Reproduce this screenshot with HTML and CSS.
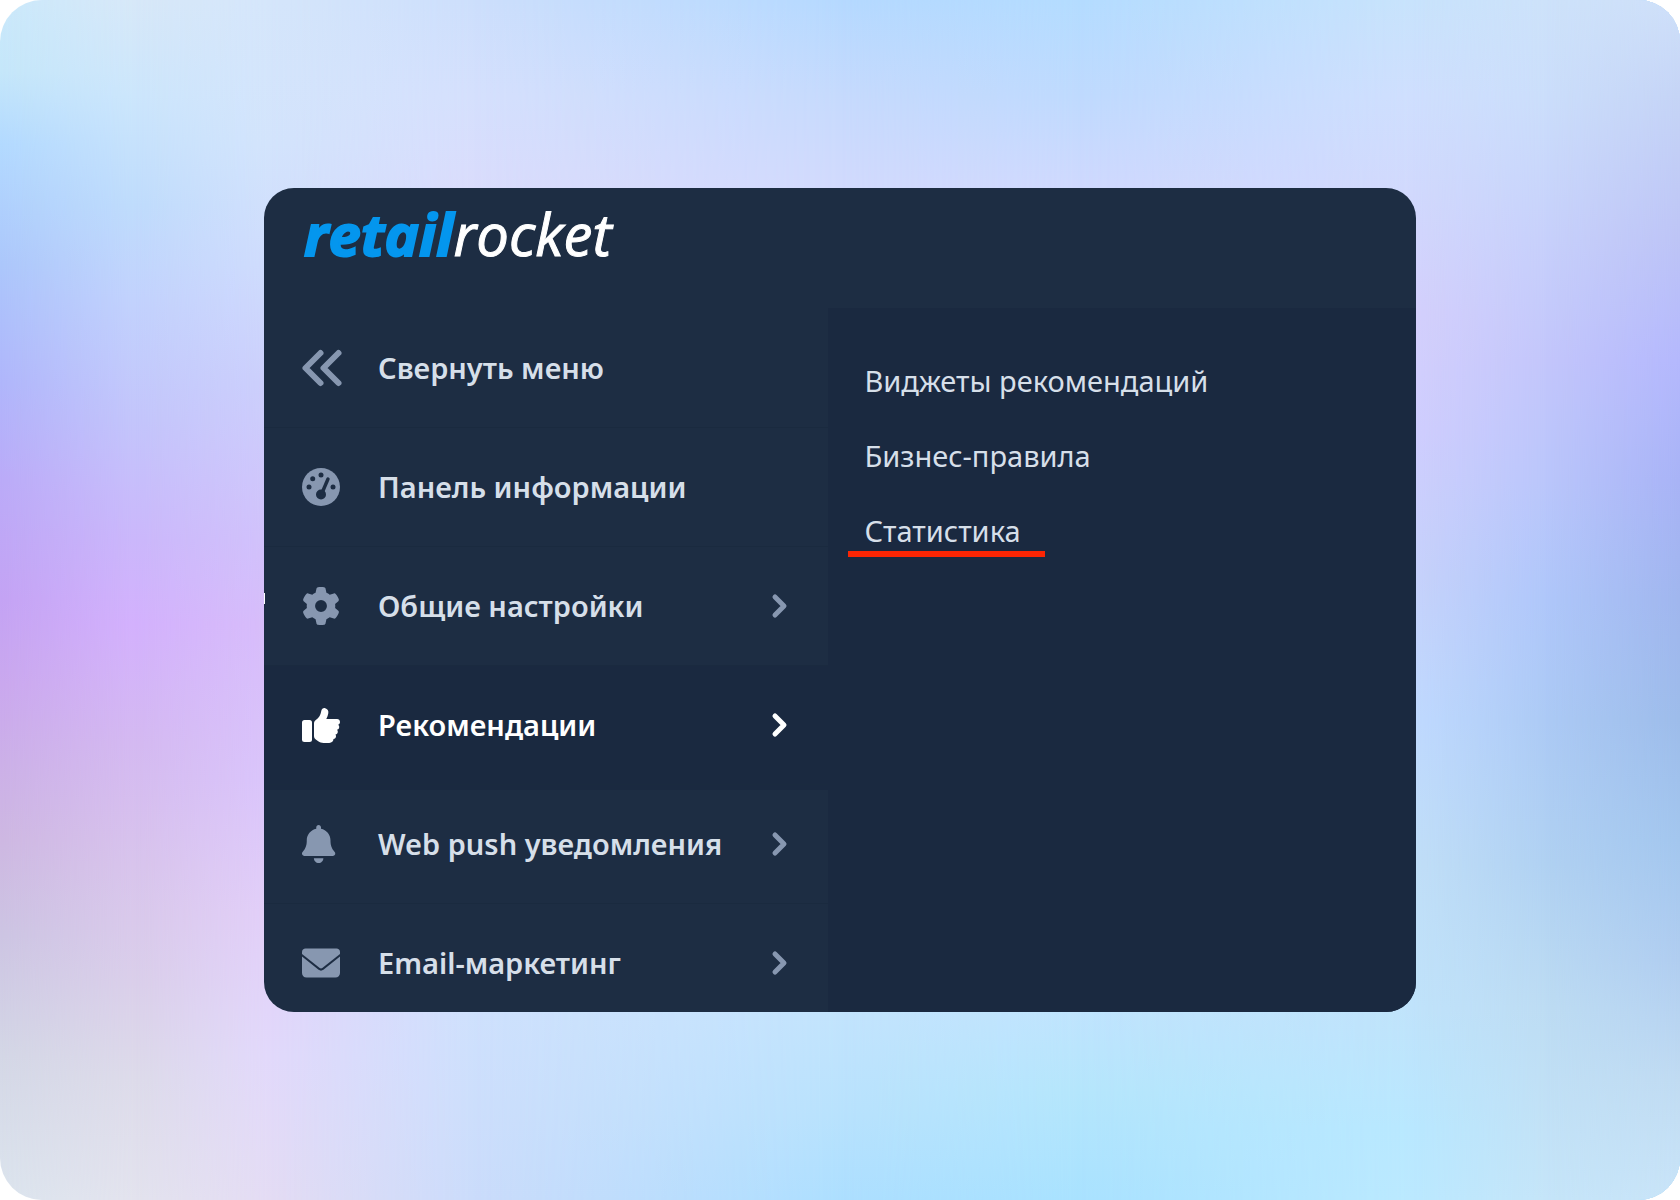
FILE: index.html
```html
<!DOCTYPE html>
<html lang="ru">
<head>
    <meta charset="UTF-8">
    <meta name="viewport" content="width=device-width, initial-scale=1.0">
    <title>Retail Rocket</title>
    <link rel="stylesheet" href="styles.css">
</head>
<body>
    <div class="stage">
        <div class="mesh" aria-hidden="true">
            <div class="band band-1"></div>
            <div class="band band-2"></div>
            <div class="band band-3"></div>
            <div class="band band-4"></div>
            <div class="band band-5"></div>
            <div class="band band-6"></div>
            <div class="band band-7"></div>
            <div class="band band-8"></div>
            <div class="band band-9"></div>
        </div>

        <div class="card">
            <header class="header">
                <a class="logo" href="#"><span class="logo-retail">retail</span><span class="logo-rocket">rocket</span></a>
            </header>

            <div class="content">
                <nav class="sidebar">
                    <button class="item" type="button">
                        <svg class="icon" viewBox="0 0 38 38" fill="none" stroke="currentColor" stroke-width="6" stroke-linecap="round" stroke-linejoin="round">
                            <path d="M18.500 4 3.500 19l15 15M36.500 4l-15 15 15 15"/>
                        </svg>
                        <span class="label">Свернуть меню</span>
                    </button>
                    <a class="item" href="#">
                        <svg class="icon" viewBox="0 0 38 38">
                            <circle cx="19" cy="19" r="19" fill="currentColor"/>
                            <g fill="#1d2d43">
                                <circle cx="7" cy="19" r="2.500"/>
                                <circle cx="10.700" cy="10.700" r="2.500"/>
                                <circle cx="19" cy="7" r="2.500"/>
                                <circle cx="31" cy="19" r="2.500"/>
                                <circle cx="19" cy="26.500" r="5"/>
                            </g>
                            <path d="M20 25l6-14" stroke="#1d2d43" stroke-width="3.400" stroke-linecap="round"/>
                        </svg>
                        <span class="label">Панель информации</span>
                    </a>
                    <a class="item" href="#">
                        <svg class="icon" viewBox="0 0 512 512" fill="currentColor">
                            <path d="M495.900 166.600c3.200 8.700.5 18.400-6.400 24.600l-43.300 39.400c1.100 8.300 1.700 16.800 1.700 25.400s-.6 17.100-1.700 25.400l43.300 39.400c6.900 6.200 9.600 15.900 6.400 24.600-4.400 11.900-9.700 23.300-15.800 34.300l-4.700 8.100c-6.600 11-14 21.400-22.100 31.200-5.900 7.200-15.700 9.600-24.500 6.800l-55.700-17.700c-13.400 10.300-28.200 18.900-44 25.400l-12.500 57.100c-2 9.100-9 16.300-18.200 17.800-13.800 2.300-28 3.500-42.500 3.500s-28.700-1.200-42.500-3.500c-9.200-1.500-16.200-8.700-18.200-17.800l-12.500-57.100c-15.800-6.500-30.600-15.100-44-25.400l-55.600 17.800c-8.800 2.800-18.600.3-24.500-6.800-8.100-9.800-15.500-20.200-22.100-31.200l-4.700-8.100c-6.100-11-11.400-22.400-15.800-34.300-3.200-8.700-.5-18.400 6.400-24.600l43.300-39.400C64.600 273.100 64 264.600 64 256s.6-17.100 1.700-25.400l-43.300-39.400c-6.900-6.200-9.600-15.900-6.400-24.600 4.400-11.900 9.700-23.300 15.800-34.300l4.700-8.100c6.600-11 14-21.400 22.100-31.200 5.900-7.200 15.700-9.600 24.500-6.800l55.700 17.700c13.400-10.300 28.200-18.900 44-25.400l12.500-57.100c2-9.100 9-16.300 18.200-17.800C227.300 1.200 241.500 0 256 0s28.700 1.200 42.500 3.500c9.200 1.500 16.200 8.700 18.200 17.800l12.500 57.100c15.800 6.500 30.600 15.100 44 25.400l55.700-17.700c8.800-2.800 18.600-.3 24.500 6.800 8.100 9.800 15.500 20.200 22.100 31.200l4.700 8.100c6.100 11 11.400 22.400 15.800 34.300zM256 336a80 80 0 1 0 0-160 80 80 0 1 0 0 160z"/>
                        </svg>
                        <span class="label">Общие настройки</span>
                        <svg class="chevron" viewBox="0 0 14 24"><path d="M2 3l9 9-9 9"/></svg>
                    </a>
                    <a class="item active" href="#" aria-current="page">
                        <svg class="icon" viewBox="0 0 38 38" fill="currentColor">
                            <rect x="0" y="14" width="10" height="22" rx="2.500"/>
                            <path d="M12 17.500c0-1.600.6-2.600 1.800-3.500 3.300-2.500 4.700-5 5.400-8.800C19.700 2.800 21.300 1.800 23.200 2.200c2.300.5 3.600 2.600 3.100 5-.4 2.100-1 3.900-2 5.800H35c1.700 0 3 1.300 3 2.900 0 1.300-.8 2.400-2 2.800.9.500 1.300 1.400 1.200 2.500-.1 1.300-1 2.300-2.200 2.600.6.600.9 1.400.8 2.300-.2 1.300-1.100 2.200-2.300 2.500.4.600.6 1.200.5 2-.2 1.400-1.100 2.200-2.500 2.500-.1 2.200-1.600 3.900-4.300 3.900h-5.700c-2 0-3.700-.6-5.300-1.700l-2.400-1.700C12.600 32.700 12 31.500 12 30z"/>
                        </svg>
                        <span class="label">Рекомендации</span>
                        <svg class="chevron" viewBox="0 0 14 24"><path d="M2 3l9 9-9 9"/></svg>
                    </a>
                    <a class="item" href="#">
                        <svg class="icon" viewBox="0 0 512 512" fill="currentColor">
                            <path d="M224 0c-17.700 0-32 14.300-32 32v19.200C119 66 64 130.600 64 208v18.800c0 47-17.300 92.400-48.500 127.600l-7.400 8.300c-8.400 9.400-10.400 22.900-5.300 34.400S19.400 416 32 416h384c12.600 0 24-7.400 29.200-18.900s3.100-25-5.300-34.400l-7.400-8.300C401.300 319.200 384 273.900 384 226.800V208c0-77.400-55-142-128-156.800V32c0-17.700-14.300-32-32-32z"/>
                            <path d="M160 448h128c0 35.300-28.600 64-64 64s-64-28.700-64-64z"/>
                        </svg>
                        <span class="label">Web push уведомления</span>
                        <svg class="chevron" viewBox="0 0 14 24"><path d="M2 3l9 9-9 9"/></svg>
                    </a>
                    <a class="item" href="#">
                        <svg class="icon" viewBox="0 0 38 38" fill="currentColor">
                            <path d="M3.500 4.500h31c2 0 3.500 1.500 3.500 3.500v2L20.300 24c-.8.600-1.800.6-2.600 0L0 10V8c0-2 1.500-3.500 3.500-3.500z"/>
                            <path d="M0 12.500 16.600 25.800c1.400 1.100 3.400 1.100 4.800 0L38 12.500V29c0 2.600-1.900 4.500-4.500 4.500h-29C1.900 33.500 0 31.600 0 29z"/>
                        </svg>
                        <span class="label">Email-маркетинг</span>
                        <svg class="chevron" viewBox="0 0 14 24"><path d="M2 3l9 9-9 9"/></svg>
                    </a>
                </nav>

                <nav class="submenu">
                    <a href="#">Виджеты рекомендаций</a>
                    <a href="#">Бизнес-правила</a>
                    <a class="marked" href="#">Статистика</a>
                </nav>
            </div>
        </div>
    </div>
</body>
</html>
```
FILE: styles.css
```css
* {
    box-sizing: border-box;
}

body {
    margin: 0;
    background: #fff;
    font-family: 'Noto Sans', 'Open Sans', sans-serif;
    font-size: 29px;
    line-height: 38px;
}

.stage {
    position: relative;
    display: flex;
    min-height: 100vh;
    padding: 188px 264px;
    border-radius: 42px;
    overflow: hidden;
}

/* Background: vertical gradients, each one fading into the next from left to right */
.mesh,
.band {
    position: absolute;
    inset: 0;
}

.band {
    -webkit-mask-image: linear-gradient(to right, transparent var(--from), #000 var(--to));
    mask-image: linear-gradient(to right, transparent var(--from), #000 var(--to));
}

.band-1 {
    --from: -1%;
    --to: 0%;
    background: linear-gradient(#cbe9fb, #c5e7fa 6%, #b3daff 12%, #acc7fb 22%, #b0b6fb 32%, #bbabf8 40%, #c4a3f4 50%, #caa8ee 57%, #ceb8e2 70%, #cdc5e3 78%, #d4d7e6 88%, #dce5ee);
}

.band-2 {
    --from: 0%;
    --to: 8%;
    background: linear-gradient(#d7e8f8, #cce6fc 8%, #bfdcfc 17%, #c2d2fd 25%, #c3c5fb 35%, #cbb7fb 45%, #d3b1fd 52%, #d4b9f1 62%, #d8c4ec 72%, #dacfea 82%, #dddbea 90%, #e3e3ee);
}

.band-3 {
    --from: 8%;
    --to: 16%;
    background: linear-gradient(#d5e6fb, #d3e4fc 12%, #cfdcfd 22%, #cccffc 32%, #d1c2fb 45%, #d7bdfa 52%, #dac5fb 65%, #e2cff8 76%, #e2d9fb 88%, #e4dcf4);
}

.band-4 {
    --from: 16%;
    --to: 28%;
    background: linear-gradient(#cddffc, #d5e0fd 8%, #dadcfc 16%, #cfe1fd 84%, #cbdcfb);
}

.band-5 {
    --from: 28%;
    --to: 50%;
    background: linear-gradient(#b5d9ff, #c6dafd 8%, #d2dafd 16%, #c3e4fd 84%, #b8e2fd 93%, #addfff);
}

.band-6 {
    --from: 50%;
    --to: 64%;
    background: linear-gradient(#b4dcff, #bfdafe 8%, #d0d9fe 16%, #c0e4fe 84%, #b5e6fc 91%, #a9e2ff);
}

.band-7 {
    --from: 64%;
    --to: 84%;
    background: linear-gradient(#c8e3fc, #cfdffe 8%, #d1d9fd 16%, #d4d0fc 26%, #d0cefe 36%, #c7d2fb 48%, #c0daff 60%, #c1dff8 72%, #c0e3fb 84%, #b9e8ff 94%, #bbe9ff);
}

.band-8 {
    --from: 84%;
    --to: 92%;
    background: linear-gradient(#cde2fa, #cbdefb 8%, #c7d0fb 20%, #c3c6fb 30%, #bac6fb 40%, #afc7fa 50%, #accaf5 60%, #b0d1f2 72%, #bddcf3 84%, #c5e5f9);
}

.band-9 {
    --from: 92%;
    --to: 100%;
    background: linear-gradient(#cfe0f9, #c5d4f6 8%, #bdc4f6 20%, #b4b8fd 30%, #a8b3f6 40%, #a0b6ee 50%, #9dbcea 60%, #a3c6ee 70%, #b0cdf0 80%, #c0dbf2 90%, #c9e4f8);
}

.card {
    position: relative;
    flex: 1;
    display: flex;
    flex-direction: column;
    border-radius: 30px;
    overflow: hidden;
    background: #1d2d43;
}

/* White tick on the left edge */
.card::before {
    content: '';
    position: absolute;
    left: 0;
    top: 405px;
    width: 1px;
    height: 11px;
    background: #fff;
}

.header {
    height: 120px;
    padding: 10px 40px;
}

.logo {
    display: inline-flex;
    font-family: 'Open Sans', 'Noto Sans', sans-serif;
    font-size: 58px;
    line-height: 72px;
    font-style: italic;
    text-decoration: none;
}

.logo-retail {
    color: #0496ee;
    font-weight: 700;
    -webkit-text-stroke: 2px #0496ee;
}

.logo-rocket {
    color: #fff;
    font-weight: 500;
    -webkit-text-stroke: 1px #fff;
}

.content {
    flex: 1;
    display: flex;
}

.sidebar {
    width: 49%;
    display: flex;
    flex-direction: column;
    padding-top: 1px;
}

.item {
    display: flex;
    align-items: center;
    gap: 38px;
    padding: 40px 41px 40px 38px;
    border: none;
    border-bottom: 1px solid #1a2a3f;
    background: none;
    color: #d6dfe9;
    font: inherit;
    font-weight: 600;
    text-align: left;
    text-decoration: none;
    cursor: pointer;
}

.item:last-child {
    padding-bottom: 27px;
    border-bottom: none;
}

.item.active {
    background: #1a2940;
    box-shadow: 0 5px 0 #1a2940;
    color: #fff;
}

.icon {
    flex: none;
    width: 38px;
    height: 38px;
    overflow: visible;
    color: #8797b0;
}

.label {
    flex: 1;
}

.chevron {
    flex: none;
    width: 14px;
    height: 24px;
    overflow: visible;
    fill: none;
    stroke: #8797b0;
    stroke-width: 5;
    stroke-linecap: round;
    stroke-linejoin: round;
}

.active .icon {
    color: #fff;
}

.active .chevron {
    stroke: #fff;
}

.submenu {
    flex: 1;
    display: flex;
    flex-direction: column;
    align-items: flex-start;
    gap: 37px;
    padding: 54px 36px;
    background: #1a2940;
}

.submenu a {
    position: relative;
    color: #d6dfe9;
    text-decoration: none;
}

.submenu .marked::after {
    content: '';
    position: absolute;
    left: -16px;
    right: -24px;
    bottom: -7px;
    height: 6px;
    background: #fb2504;
}
```
